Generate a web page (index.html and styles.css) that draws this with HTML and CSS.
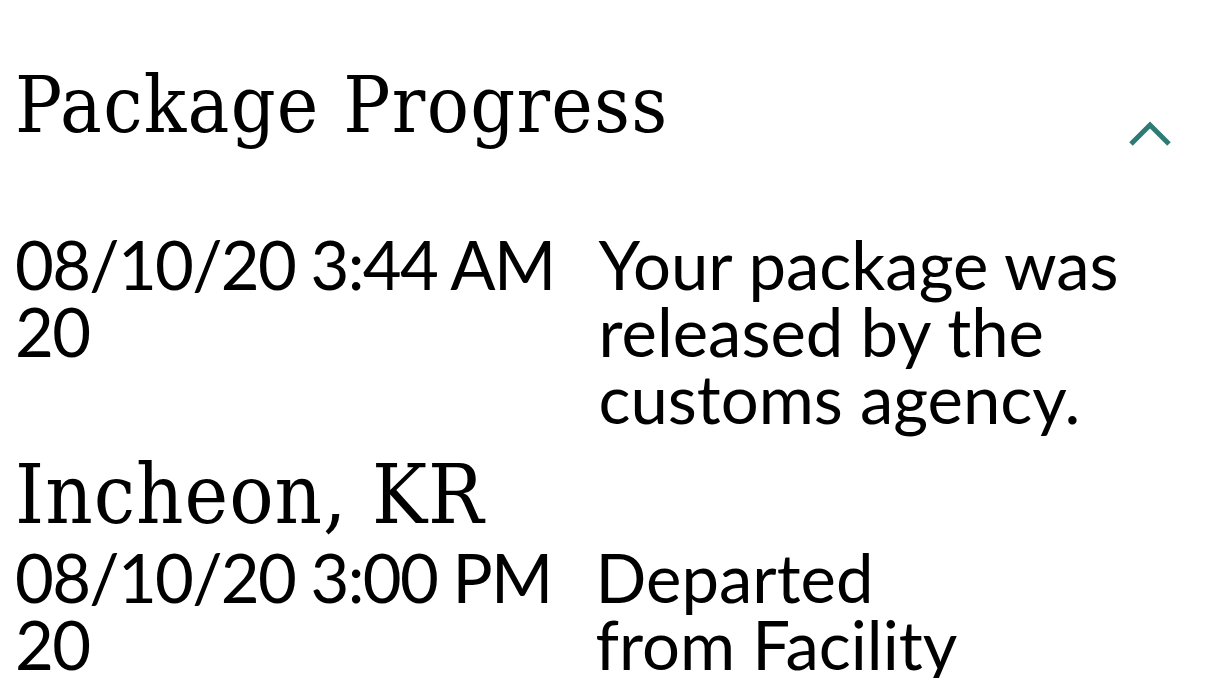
FILE: index.html
```html
<!DOCTYPE html>
<html lang="en">
<head>
    <meta charset="UTF-8">
    <title>Package Progress</title>
    <link rel="stylesheet" href="styles.css">
</head>
<body>
    <section class="progress">
        <header class="progress-head">
            <h2 class="progress-title">Package Progress</h2>
            <button class="toggle" type="button" aria-label="Collapse">
                <svg width="48" height="30" viewBox="0 0 48 30"><polyline points="5,25 24,6 43,25" /></svg>
            </button>
        </header>
        <ul class="events">
            <li class="event">
                <div class="event-time">08/10/20 3:44 AM<br>20</div>
                <div class="event-text">Your package was<br>released by the<br>customs agency.</div>
            </li>
            <li class="event">
                <h3 class="event-place">Incheon, KR</h3>
                <div class="event-time">08/10/20 3:00 PM<br>20</div>
                <div class="event-text">Departed<br>from Facility</div>
            </li>
        </ul>
    </section>
</body>
</html>
```
FILE: styles.css
```css
body {
    margin: 0;
    color: #000;
    background: #fff;
    font-family: "Lato", "Noto Sans", sans-serif;
}

.progress {
    padding: 0 39px 0 15px;
}

.progress-head {
    display: flex;
    justify-content: space-between;
    align-items: flex-start;
    padding-top: 58px;
}

.progress-title,
.event-place {
    margin: 0;
    font-family: "DejaVu Serif Condensed", "DejaVu Serif", serif;
    font-weight: normal;
    letter-spacing: 1.3px;
}

.progress-title {
    font-size: 78px;
    line-height: 94px;
}

.toggle {
    margin: 61px 0 0;
    padding: 0;
    border: 0;
    background: none;
    line-height: 0;
}

.toggle polyline {
    fill: none;
    stroke: #2e7b73;
    stroke-width: 5;
}

.events {
    list-style: none;
    margin: 79px 0 0;
    padding: 0;
}

.event {
    display: grid;
    grid-template-columns: max-content 1fr;
    column-gap: 44px;
    font-size: 67px;
    line-height: 67px;
}

.event + .event {
    margin-top: 18px;
}

.event-place {
    grid-column: 1 / -1;
    font-size: 82px;
    line-height: 90px;
    margin-bottom: 4px;
    letter-spacing: 1px;
}

.event-time {
    white-space: nowrap;
    letter-spacing: -1.7px;
}
```
